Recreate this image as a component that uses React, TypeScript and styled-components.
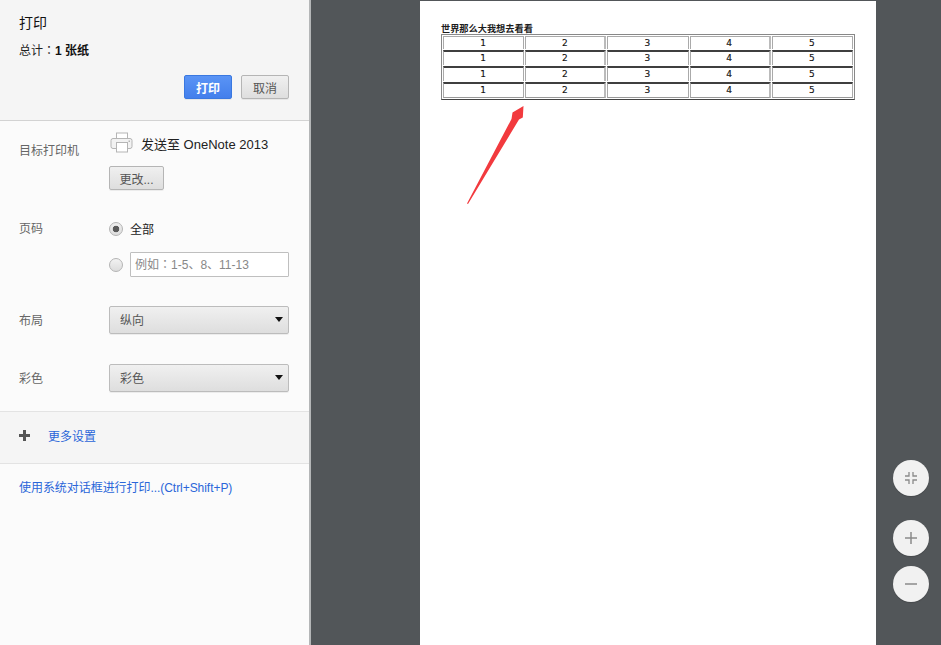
import React from "react";
import styled, { createGlobalStyle } from "styled-components";

const GlobalStyle = createGlobalStyle`
  html, body {
    margin: 0;
    padding: 0;
    width: 941px;
    height: 645px;
    overflow: hidden;
    font-family: "Liberation Sans", "Noto Sans CJK SC", sans-serif;
    font-size: 12px;
  }
`;

const Shell = styled.div`
  display: flex;
  width: 941px;
  height: 645px;
  overflow: hidden;
`;

const Sidebar = styled.aside`
  width: 309px;
  flex: none;
  background: #fbfbfb;
  border-right: 2px solid #b4b6b7;
  display: flex;
  flex-direction: column;
`;

const Header = styled.header`
  height: 121px;
  box-sizing: border-box;
  padding: 13px 20px 0 19px;
  background: #f5f5f5;
  border-bottom: 1px solid #d3d3d3;
  flex: none;
`;

const Title = styled.h1`
  margin: 0;
  font-size: 14px;
  line-height: 20px;
  font-weight: 400;
  color: #111;
`;

const Summary = styled.div`
  margin-top: 9px;
  font-size: 12px;
  line-height: 18px;
  color: #222;
  b {
    color: #111;
    font-weight: 700;
  }
`;

// TC face sets the full-width colon in the middle of its box
const Colon = styled.span`
  font-family: "Noto Sans CJK TC", sans-serif;
  line-height: 0;
`;

const Actions = styled.div`
  display: flex;
  justify-content: flex-end;
  gap: 9px;
  margin-top: 15px;
`;

const Button = styled.button<{ $primary?: boolean; $width: number }>`
  width: ${(p) => p.$width}px;
  height: 24px;
  box-sizing: border-box;
  padding: 0;
  border-radius: 2px;
  font: ${(p) => (p.$primary ? 700 : 400)} 12px "Liberation Sans", "Noto Sans CJK SC", sans-serif;
  color: ${(p) => (p.$primary ? "#fff" : "#555")};
  border: 1px solid ${(p) => (p.$primary ? "#3a78e0" : "#b5b5b5")};
  background: ${(p) =>
    p.$primary
      ? "linear-gradient(#5a94f5, #437fec)"
      : "linear-gradient(#f0f0f0, #dedede)"};
  box-shadow: 0 1px 0 rgba(0, 0, 0, 0.06);
`;

const Settings = styled.div`
  display: flex;
  flex-direction: column;
  flex: none;
  height: 290px;
  box-sizing: border-box;
`;

const SettingRow = styled.div<{ $height: number; $top: number }>`
  display: grid;
  grid-template-columns: 90px 180px;
  padding: ${(p) => p.$top}px 0 0 19px;
  height: ${(p) => p.$height}px;
  box-sizing: border-box;
`;

const Label = styled.div<{ $offset?: number }>`
  color: #666;
  line-height: 18px;
  padding-top: ${(p) => p.$offset ?? 0}px;
`;

const Printer = styled.div`
  display: flex;
  align-items: center;
  height: 24px;
  gap: 7px;
  font-size: 13px;
  color: #222;
  padding-left: 1px;
  white-space: nowrap;
`;

const PrinterBlock = styled.div`
  display: flex;
  flex-direction: column;
  gap: 11px;
  align-items: flex-start;
`;

const RadioLine = styled.label`
  display: flex;
  align-items: center;
  gap: 7px;
  color: #222;
  font-size: 12px;
`;

const RadioStack = styled.div`
  display: flex;
  flex-direction: column;
  gap: 15px;
`;

const Radio = styled.span<{ $checked?: boolean }>`
  width: 14px;
  height: 14px;
  box-sizing: border-box;
  flex: none;
  border-radius: 50%;
  border: 1px solid #b4b4b4;
  background: ${(p) =>
    p.$checked
      ? "radial-gradient(circle, #5a5a5a 0 3px, transparent 3.6px), linear-gradient(#eee, #ddd)"
      : "linear-gradient(#f2f2f2, #dcdcdc)"};
`;

const PageInput = styled.div`
  width: 159px;
  height: 25px;
  box-sizing: border-box;
  background: #fff;
  border: 1px solid #bfbfbf;
  border-radius: 1px;
  padding-left: 4px;
  line-height: 25px;
  color: #888;
`;

const Select = styled.div`
  width: 180px;
  height: 28px;
  box-sizing: border-box;
  display: flex;
  align-items: center;
  justify-content: space-between;
  padding: 0 5px 2px 10px;
  color: #555;
  border: 1px solid #bcbcbc;
  border-radius: 2px;
  background: linear-gradient(#f0f0f0, #dedede);
  box-shadow: 0 1px 0 rgba(0, 0, 0, 0.06);
`;

const Caret = styled.i`
  width: 0;
  height: 0;
  border-left: 4.5px solid transparent;
  border-right: 4.5px solid transparent;
  border-top: 5px solid #111;
`;

const MoreRow = styled.div`
  height: 53px;
  flex: none;
  box-sizing: border-box;
  display: flex;
  align-items: center;
  gap: 18px;
  padding: 0 0 4px 19px;
  background: #f5f5f5;
  border-top: 1px solid #e3e3e3;
  border-bottom: 1px solid #e3e3e3;
`;

const LinkText = styled.a`
  color: #2a66d9;
  font-size: 12px;
  text-decoration: none;
  cursor: pointer;
`;

const SystemRow = styled.div`
  padding: 15px 0 0 19px;
  line-height: 18px;
  letter-spacing: -0.05px;
`;

const Preview = styled.main`
  position: relative;
  flex: 1;
  background: #525659;
  padding-top: 1px;
  overflow: hidden;
`;

const Sheet = styled.div`
  position: relative;
  width: 456px;
  height: 660px;
  margin-left: 109px;
  box-sizing: border-box;
  background: #fff;
  padding: 23px 21px 0;
`;

const SheetTitle = styled.div`
  font-size: 9.2px;
  line-height: 10px;
  font-weight: 700;
  color: #1c1c1c;
  white-space: nowrap;
`;

const DataTable = styled.table`
  width: 414px;
  border-collapse: separate;
  border-spacing: 1px;
  border: 1px solid #888;
  border-bottom-color: #444;
  table-layout: fixed;
`;

const Cell = styled.td`
  height: 13px;
  padding: 0 1px 0 0;
  text-align: center;
  font-family: "DejaVu Sans", sans-serif;
  font-size: 9px;
  line-height: 13px;
  color: #111;
  -webkit-text-stroke: 0.15px #111;
  border: 1px solid #aaa;
  border-top: 2px solid #3f3f3f;
  border-bottom: 0;
  &:nth-child(2),
  &:nth-child(4) {
    border-right: 2px solid #bbb;
  }
  tr:first-child & {
    height: 12px;
    line-height: 12px;
    border-top: 1px solid #aaa;
  }
  tr:last-child & {
    border-bottom: 1px solid #999;
  }
`;

const Arrow = styled.svg`
  position: absolute;
  left: 40px;
  top: 98px;
`;

const ZoomStack = styled.div`
  position: absolute;
  right: 12px;
  bottom: 43px;
  display: flex;
  flex-direction: column;
  gap: 10px;
`;

const ZoomButton = styled.button<{ $gap?: number }>`
  width: 36px;
  height: 36px;
  padding: 0;
  border: none;
  border-radius: 50%;
  background: #f1f1f1;
  display: flex;
  align-items: center;
  justify-content: center;
  margin-bottom: ${(p) => p.$gap ?? 0}px;
  box-shadow: 0 1px 1px rgba(0, 0, 0, 0.15);
`;

const PrinterIcon = () => (
  <svg width="24" height="22" viewBox="0 0 24 22" fill="none">
    <rect x="6.5" y="1" width="11" height="6" fill="#fff" stroke="#b5b5b5" />
    <rect x="1" y="6.5" width="21" height="10" rx="2" fill="#f2f2f2" stroke="#b5b5b5" />
    <rect x="6.5" y="10.5" width="11" height="9.5" fill="#fff" stroke="#b5b5b5" />
    <rect x="18.5" y="8.5" width="1.5" height="1.5" fill="#b5b5b5" />
  </svg>
);

const PlusIcon = () => (
  <svg width="11" height="11" viewBox="0 0 11 11">
    <path d="M4 0h3v4h4v3H7v4H4V7H0V4h4z" fill="#555" />
  </svg>
);

const rows = [0, 1, 2, 3];
const cols = [1, 2, 3, 4, 5];

export default function App() {
  return (
    <>
      <GlobalStyle />
      <Shell>
        <Sidebar>
          <Header>
            <Title>打印</Title>
            <Summary>
              总计<Colon>：</Colon>
              <b>1 张纸</b>
            </Summary>
            <Actions>
              <Button $primary $width={48}>打印</Button>
              <Button $width={48}>取消</Button>
            </Actions>
          </Header>
          <Settings>
            <SettingRow $height={99} $top={10}>
              <Label $offset={11}>目标打印机</Label>
              <PrinterBlock>
                <Printer>
                  <PrinterIcon />
                  <span>发送至 OneNote 2013</span>
                </Printer>
                <Button $width={55}>更改...</Button>
              </PrinterBlock>
            </SettingRow>
            <SettingRow $height={86} $top={0}>
              <Label>页码</Label>
              <RadioStack>
                <RadioLine>
                  <Radio $checked />
                  全部
                </RadioLine>
                <RadioLine>
                  <Radio />
                  <PageInput>
                    例如<Colon>：</Colon>1-5、8、11-13
                  </PageInput>
                </RadioLine>
              </RadioStack>
            </SettingRow>
            <SettingRow $height={58} $top={0}>
              <Label $offset={6}>布局</Label>
              <Select>
                纵向
                <Caret />
              </Select>
            </SettingRow>
            <SettingRow $height={47} $top={0}>
              <Label $offset={6}>彩色</Label>
              <Select>
                彩色
                <Caret />
              </Select>
            </SettingRow>
          </Settings>
          <MoreRow>
            <PlusIcon />
            <LinkText>更多设置</LinkText>
          </MoreRow>
          <SystemRow>
            <LinkText>使用系统对话框进行打印...(Ctrl+Shift+P)</LinkText>
          </SystemRow>
        </Sidebar>
        <Preview>
          <Sheet>
            <SheetTitle>世界那么大我想去看看</SheetTitle>
            <DataTable>
              <tbody>
                {rows.map((r) => (
                  <tr key={r}>
                    {cols.map((c) => (
                      <Cell key={c}>{c}</Cell>
                    ))}
                  </tr>
                ))}
              </tbody>
            </DataTable>
            <Arrow width="64" height="106" viewBox="0 0 64 106">
              <path d="M7 104.5L51.5 20L52.5 13.5L63.5 7L62.8 18.5L59 20.5L8 105Z" fill="#f23a3e" />
            </Arrow>
          </Sheet>
          <ZoomStack>
            <ZoomButton $gap={14}>
              <svg width="12" height="12" viewBox="0 0 12 12" fill="none" stroke="#8a8a8a" strokeWidth="1.3">
                <path d="M4 0V4H0M8 0V4H12M4 12V8H0M8 12V8H12" />
              </svg>
            </ZoomButton>
            <ZoomButton>
              <svg width="12" height="12" viewBox="0 0 12 12" fill="none" stroke="#8a8a8a" strokeWidth="1.5">
                <path d="M6 0V12M0 6H12" />
              </svg>
            </ZoomButton>
            <ZoomButton>
              <svg width="12" height="12" viewBox="0 0 12 12" fill="none" stroke="#8a8a8a" strokeWidth="1.5">
                <path d="M0 6H12" />
              </svg>
            </ZoomButton>
          </ZoomStack>
        </Preview>
      </Shell>
    </>
  );
}
